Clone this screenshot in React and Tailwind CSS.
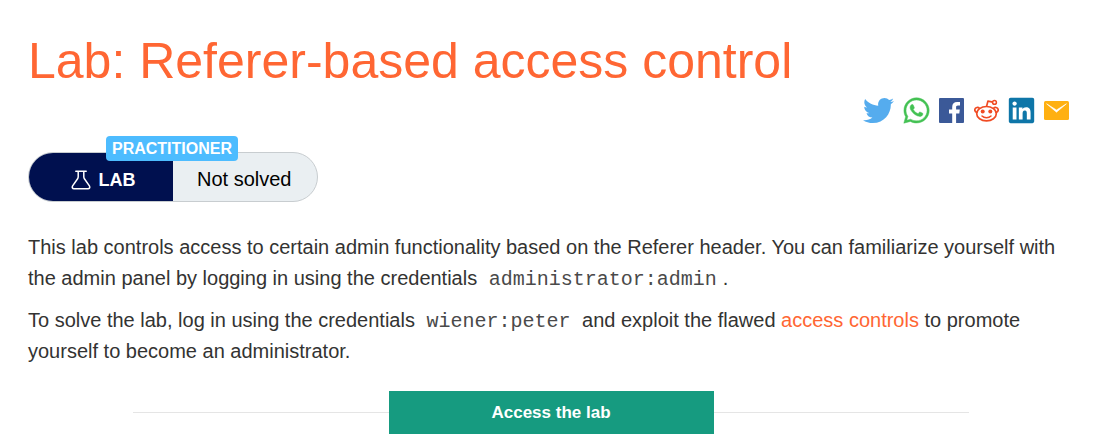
import React from "react";
import { FaTwitter, FaWhatsapp, FaLinkedin } from "react-icons/fa";

function FacebookIcon() {
  return (
    <svg viewBox="0 0 25 25" className="size-[25px]" aria-hidden="true">
      <rect width="25" height="25" rx="1" fill="#3b5998" />
      <path
        fill="#fff"
        d="M17.1 25v-9.6h3.2l.5-3.8h-3.7V9.2c0-1.1.3-1.8 1.9-1.8h2V4c-.4 0-1.500-.1-2.900-.1-2.900 0-4.900 1.700-4.900 5v2.700H10v3.800h3.200V25z"
      />
    </svg>
  );
}

function RedditIcon() {
  return (
    <svg viewBox="0 0 25 25" className="size-[25px]" fill="none" stroke="#f04b23" strokeWidth="1.7" aria-hidden="true">
      <ellipse cx="12.5" cy="15.700" rx="9.800" ry="7.200" />
      <path d="M3 14.600C1.200 14 .6 12.600.9 11.300c.5-2 3.200-2.600 4.700-.8M22 14.600c1.800-.6 2.400-2 2.100-3.300-.5-2-3.200-2.600-4.700-.8" />
      <path d="M12.500 8.600l1.400-5.400 4.900 1" strokeLinejoin="round" />
      <circle cx="20.500" cy="4.400" r="1.900" strokeWidth="1.500" />
      <circle cx="8.700" cy="13.600" r="2" fill="#f04b23" stroke="none" />
      <circle cx="16.300" cy="13.600" r="2" fill="#f04b23" stroke="none" />
      <path d="M8 18c2.200 2.200 6.800 2.200 9 0" strokeLinecap="round" strokeWidth="1.500" />
    </svg>
  );
}

function MailIcon() {
  return (
    <svg viewBox="0 0 25 25" className="size-[25px]" aria-hidden="true">
      <rect y="3" width="25" height="19" rx="1.500" fill="#ffb011" />
      <path d="M2.600 5.800L12.500 12l9.900-6.200L12.500 14.200z" fill="#fff" stroke="#fff" strokeWidth=".6" />
    </svg>
  );
}

function FlaskIcon() {
  return (
    <svg viewBox="0 0 20 20" className="size-5" fill="none" stroke="#fff" strokeWidth="1.500" strokeLinejoin="round" strokeLinecap="round" aria-hidden="true">
      <path d="M4.800 1.200h10.400M7.200 1.200v5.600c0 .8-.2 1.400-.6 2L1.600 15.900c-.9 1.400-.2 2.900 1.400 2.900h14c1.600 0 2.300-1.500 1.400-2.900L13.400 8.800c-.4-.6-.6-1.200-.6-2V1.200" />
    </svg>
  );
}

const shares = [
  { name: "Twitter", icon: <FaTwitter className="size-[31px]" />, tone: "text-[#55acee]" },
  { name: "WhatsApp", icon: <FaWhatsapp className="-mx-[2px] size-[29px]" stroke="currentColor" strokeWidth="8" />, tone: "text-[#43c153]" },
  { name: "Facebook", icon: <FacebookIcon />, tone: "" },
  { name: "Reddit", icon: <RedditIcon />, tone: "" },
  { name: "LinkedIn", icon: <FaLinkedin className="-mx-[2px] size-[29px]" />, tone: "text-[#0e76a8]" },
  { name: "Email", icon: <MailIcon />, tone: "" },
];

function Credential({ children }) {
  return (
    <code className="px-[6px] text-xl leading-5 text-[#4a4a4a] font-['Liberation_Mono','Courier_New',monospace]">
      {children}
    </code>
  );
}

export default function App() {
  return (
    <main className="bg-white pt-8 pr-[19px] pb-3 pl-7 font-['Liberation_Sans',Arial,sans-serif] text-xl leading-[31px] text-[#333332]">
      <h1 className="text-[50px] leading-[58px] text-[#ff6633]">Lab: Referer-based access control</h1>

      <nav aria-label="Share" className="mt-2 mr-[5px] flex items-center justify-end gap-[10px]">
        {shares.map((s) => (
          <a key={s.name} href="#" aria-label={s.name} className={`flex h-[25px] shrink-0 items-center ${s.tone}`}>
            {s.icon}
          </a>
        ))}
      </nav>

      <div className="relative mt-[29px] flex h-[50px] w-fit rounded-full border border-[#c8cdd0] bg-[#eaeff2]">
        <div className="flex w-36 items-center justify-center gap-2 rounded-l-full bg-[#00104f] pt-[5px] pl-4 pr-3 text-lg font-bold text-white">
          <FlaskIcon />
          LAB
        </div>
        <div className="flex items-center pt-[5px] pr-[25px] pl-6 text-black">Not solved</div>
        <span className="absolute -top-[17px] left-[77px] rounded bg-[#4dbcff] px-[6px] text-base leading-[25px] font-bold text-white">
          PRACTITIONER
        </span>
      </div>

      <p className="mt-[30px]">
        This lab controls access to certain admin functionality based on the Referer header. You can familiarize
        yourself with the admin panel by logging in using the credentials <Credential>administrator:admin</Credential>.
      </p>
      <p className="mt-[11px]">
        To solve the lab, log in using the credentials <Credential>wiener:peter</Credential> and exploit the flawed{" "}
        <a href="#" className="text-[#ff6633]">access controls</a> to promote yourself to become an administrator.
      </p>

      <div className="mx-[10%] mt-6 flex items-center">
        <span className="h-px flex-1 bg-[#e5e5e5]" />
        <a href="#" className="w-[325px] bg-[#169b80] text-center text-[17px] leading-[43px] font-bold text-white">
          Access the lab
        </a>
        <span className="h-px flex-1 bg-[#e5e5e5]" />
      </div>
    </main>
  );
}
